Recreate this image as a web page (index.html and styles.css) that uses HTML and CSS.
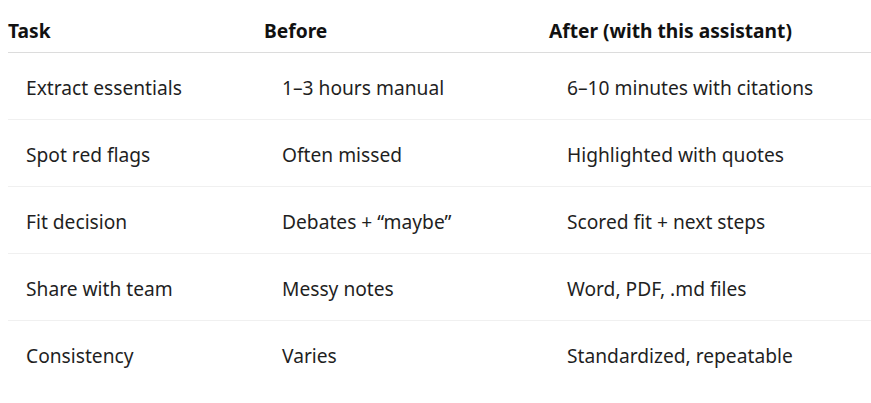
FILE: index.html
```html
<!DOCTYPE html>
<html>
<head>
<meta charset="utf-8">
<link rel="stylesheet" href="styles.css">
</head>
<body>
<table class="cmp">
  <thead>
    <tr><th class="c1">Task</th><th class="c2">Before</th><th class="c3">After (with this assistant)</th></tr>
  </thead>
  <tbody>
    <tr><td>Extract essentials</td><td>1–3 hours manual</td><td>6–10 minutes with citations</td></tr>
    <tr><td>Spot red flags</td><td>Often missed</td><td>Highlighted with quotes</td></tr>
    <tr><td>Fit decision</td><td>Debates + “maybe”</td><td>Scored fit + next steps</td></tr>
    <tr><td>Share with team</td><td>Messy notes</td><td>Word, PDF, .md files</td></tr>
    <tr><td>Consistency</td><td>Varies</td><td>Standardized, repeatable</td></tr>
  </tbody>
</table>
</body>
</html>
```
FILE: styles.css
```css
html, body { margin: 0; padding: 0; background: #fff; }
body { padding: 8px 0 0 8px; font-family: "Noto Sans", "Open Sans", sans-serif; color: #1f1f1f; }
.cmp { border-collapse: collapse; width: 863px; table-layout: fixed; font-size: 19.2px; }
.c1 { width: 256px; }
.c2 { width: 285px; }
.cmp th { text-align: left; font-weight: 700; height: 44px; padding: 0; border-bottom: 1px solid #dcdcdc; vertical-align: middle; color: #111; }
.cmp td { height: 63px; padding: 3px 0 0 18px; border-bottom: 1px solid #f0f0f0; vertical-align: middle; }
.cmp tbody tr:last-child td { border-bottom: none; }
```
